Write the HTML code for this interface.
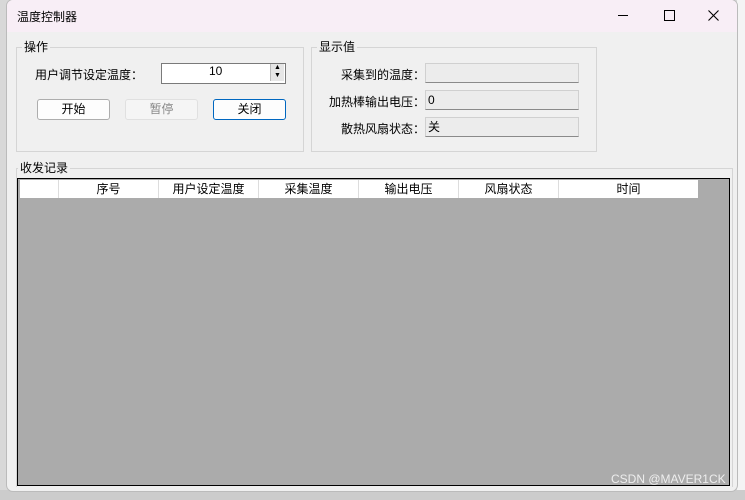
<!DOCTYPE html>
<html><head><meta charset="utf-8"><style>
body{margin:0;width:745px;height:500px;background:#d8d8d8;position:relative;overflow:hidden;font-family:"Liberation Sans","Noto Sans CJK SC",sans-serif;font-size:12px;color:#000}
.a{position:absolute}
.win{left:6px;top:-1px;width:730px;height:491px;background:#f0f0f0;border:1px solid #bbb;border-radius:7px;overflow:hidden}
.tb{left:0;top:0;width:730px;height:32px;background:#f8eef6}
.gb{border:1px solid #d5d5d5}
.lg{background:#f0f0f0;padding:0 2px;font-size:12px}
.btn{border:1px solid #adadad;border-radius:3px;background:#fdfdfd;text-align:center;line-height:19px;height:19px}
.ro{background:#ececec;border:1px solid #d0d0d0;border-bottom:1px solid #8a8a8a;height:18px;line-height:18px;padding-left:2px}
.r{text-align:right}
.hc{top:0;height:18px;line-height:18px;text-align:center;border-right:1px solid #ddd}
</style></head><body>
<div class="a" style="left:737px;top:0;width:8px;height:500px;background:#f4f4f4"></div>
<div class="a" style="left:0;top:490px;width:745px;height:10px;background:#ccc"></div>
<div class="a win">
 <div class="a tb"></div>
 <div class="a" style="left:10px;top:8px;font-size:12px">温度控制器</div>
 <div class="a" style="left:611px;top:15px;width:10px;height:1px;background:#000"></div>
 <div class="a" style="left:657px;top:10px;width:9px;height:9px;border:1px solid #000"></div>
 <svg class="a" style="left:701px;top:10px" width="11" height="11"><path d="M0.5 0.5L10.5 10.5M10.5 0.5L0.5 10.5" stroke="#000" stroke-width="1.1"/></svg>

 <div class="a gb" style="left:9px;top:47px;width:286px;height:103px"></div>
 <div class="a lg" style="left:15px;top:38px">操作</div>
 <div class="a" style="left:28px;top:66px">用户调节设定温度：</div>
 <div class="a" style="left:154px;top:63px;width:123px;height:19px;background:#fff;border:1px solid #7a7a7a"></div>
 <div class="a" style="left:202px;top:64px">10</div>
 <div class="a" style="left:263px;top:64px;width:13px;height:17px;background:#e6e6e6;border-left:1px solid #bbb;font-size:7px;line-height:8px;text-align:center">▲<br>▼</div>
 <div class="a btn" style="left:30px;top:99px;width:71px">开始</div>
 <div class="a btn" style="left:118px;top:99px;width:71px;border-color:#e0e0e0;color:#888;background:#f5f5f5">暂停</div>
 <div class="a btn" style="left:206px;top:99px;width:71px;border-color:#0067c0">关闭</div>

 <div class="a gb" style="left:304px;top:47px;width:284px;height:103px"></div>
 <div class="a lg" style="left:310px;top:38px">显示值</div>
 <div class="a r" style="left:300px;top:66px;width:118px">采集到的温度：</div>
 <div class="a r" style="left:300px;top:93px;width:118px">加热棒输出电压：</div>
 <div class="a r" style="left:300px;top:120px;width:118px">散热风扇状态：</div>
 <div class="a ro" style="left:418px;top:63px;width:150px"></div>
 <div class="a ro" style="left:418px;top:90px;width:150px">0</div>
 <div class="a ro" style="left:418px;top:117px;width:150px">关</div>

 <div class="a gb" style="left:9px;top:168px;width:715px;height:318px;border-bottom:none"></div>
 <div class="a lg" style="left:11px;top:159px">收发记录</div>
 <div class="a" style="left:10px;top:178px;width:711px;height:306px;background:#ababab;border:1px solid #000">
  <div class="a" style="left:2px;top:1px;width:678px;height:18px;background:#fff">
   <div class="a hc" style="left:0;width:38px"></div>
   <div class="a hc" style="left:39px;width:99px">序号</div>
   <div class="a hc" style="left:139px;width:99px">用户设定温度</div>
   <div class="a hc" style="left:239px;width:99px">采集温度</div>
   <div class="a hc" style="left:339px;width:99px">输出电压</div>
   <div class="a hc" style="left:439px;width:99px">风扇状态</div>
   <div class="a hc" style="left:539px;width:139px;border:none">时间</div>
  </div>
 </div>
 <div class="a" style="left:604px;top:472px;color:#eee;font-size:12px">CSDN @MAVER1CK</div>
</div>
</body></html>
